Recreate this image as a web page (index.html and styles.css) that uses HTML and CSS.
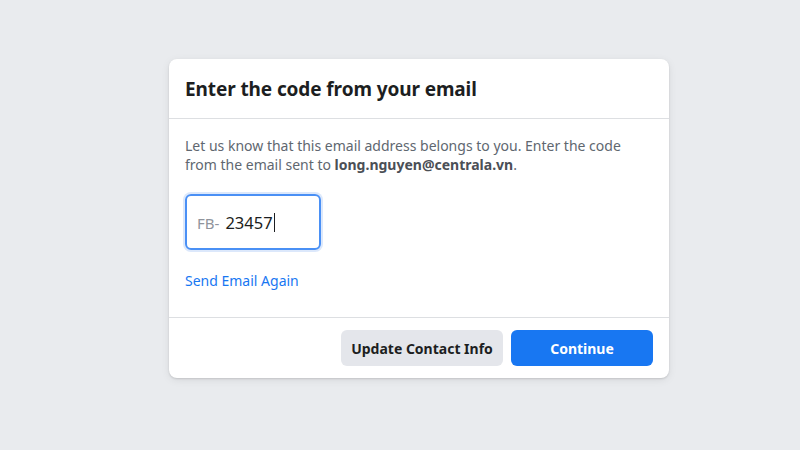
FILE: index.html
```html
<!DOCTYPE html>
<html>
<head>
<meta charset="utf-8">
<link rel="stylesheet" href="styles.css">
</head>
<body>
<div class="page">
  <div class="card">
    <div class="card-header">
      <h2 class="title">Enter the code from your email</h2>
    </div>
    <div class="card-body">
      <p class="desc">Let us know that this email address belongs to you. Enter the code from the email sent to <strong>long.nguyen@centrala.vn</strong>.</p>
      <div class="code-input">
        <span class="prefix">FB-</span>
        <span class="value">23457</span><span class="caret"></span>
      </div>
      <a class="link" href="#">Send Email Again</a>
    </div>
    <div class="card-footer">
      <button class="btn btn-secondary">Update Contact Info</button>
      <button class="btn btn-primary">Continue</button>
    </div>
  </div>
</div>
</body>
</html>
```
FILE: styles.css
```css
html, body {
  margin: 0;
  padding: 0;
}
body {
  background: #e9ebee;
  font-family: "Noto Sans", "Liberation Sans", sans-serif;
  width: 800px;
  height: 450px;
  overflow: hidden;
}
.page {
  padding: 59px 0 0 169px;
}
.card {
  width: 500px;
  background: #fff;
  border-radius: 8px;
  box-shadow: 0 1px 2px rgba(0,0,0,0.12), 0 2px 8px rgba(0,0,0,0.08);
}
.card-header {
  height: 60px;
  padding: 0 16px;
  display: flex;
  align-items: center;
  border-bottom: 1px solid #dddfe2;
  box-sizing: border-box;
}
.title {
  margin: 0;
  font-size: 19px;
  font-weight: 700;
  color: #1c1e21;
  letter-spacing: -0.1px;
}
.card-body {
  padding: 17px 16px 27px;
  border-bottom: 1px solid #dddfe2;
}
.desc {
  margin: 0 0 20px;
  font-size: 14px;
  line-height: 19px;
  color: #606770;
}
.desc strong {
  color: #4b4f56;
  font-weight: 700;
}
.code-input {
  width: 136px;
  height: 56px;
  box-sizing: border-box;
  border: 2px solid #4a90f5;
  border-radius: 6px;
  box-shadow: 0 0 0 2px #dce8fb;
  display: flex;
  align-items: center;
  padding-left: 10px;
}
.prefix {
  color: #90949c;
  font-size: 15px;
  margin-right: 6px;
  margin-top: 2px;
}
.value {
  color: #1c1e21;
  font-size: 16.5px;
}
.caret {
  display: inline-block;
  width: 1px;
  height: 19px;
  background: #1c1e21;
  margin-left: 1px;
}
.link {
  display: block;
  margin-top: 21px;
  color: #1877f2;
  font-size: 14px;
  text-decoration: none;
  line-height: 19px;
}
.card-footer {
  display: flex;
  justify-content: flex-end;
  gap: 8px;
  padding: 12px 16px 12px;
}
.btn {
  height: 36px;
  border: none;
  border-radius: 6px;
  font-family: inherit;
  font-size: 14px;
  font-weight: 700;
  padding: 0;
}
.btn-secondary {
  width: 162px;
  background: #e4e6eb;
  color: #1c1e21;
}
.btn-primary {
  width: 142px;
  background: #1877f2;
  color: #fff;
}
```
